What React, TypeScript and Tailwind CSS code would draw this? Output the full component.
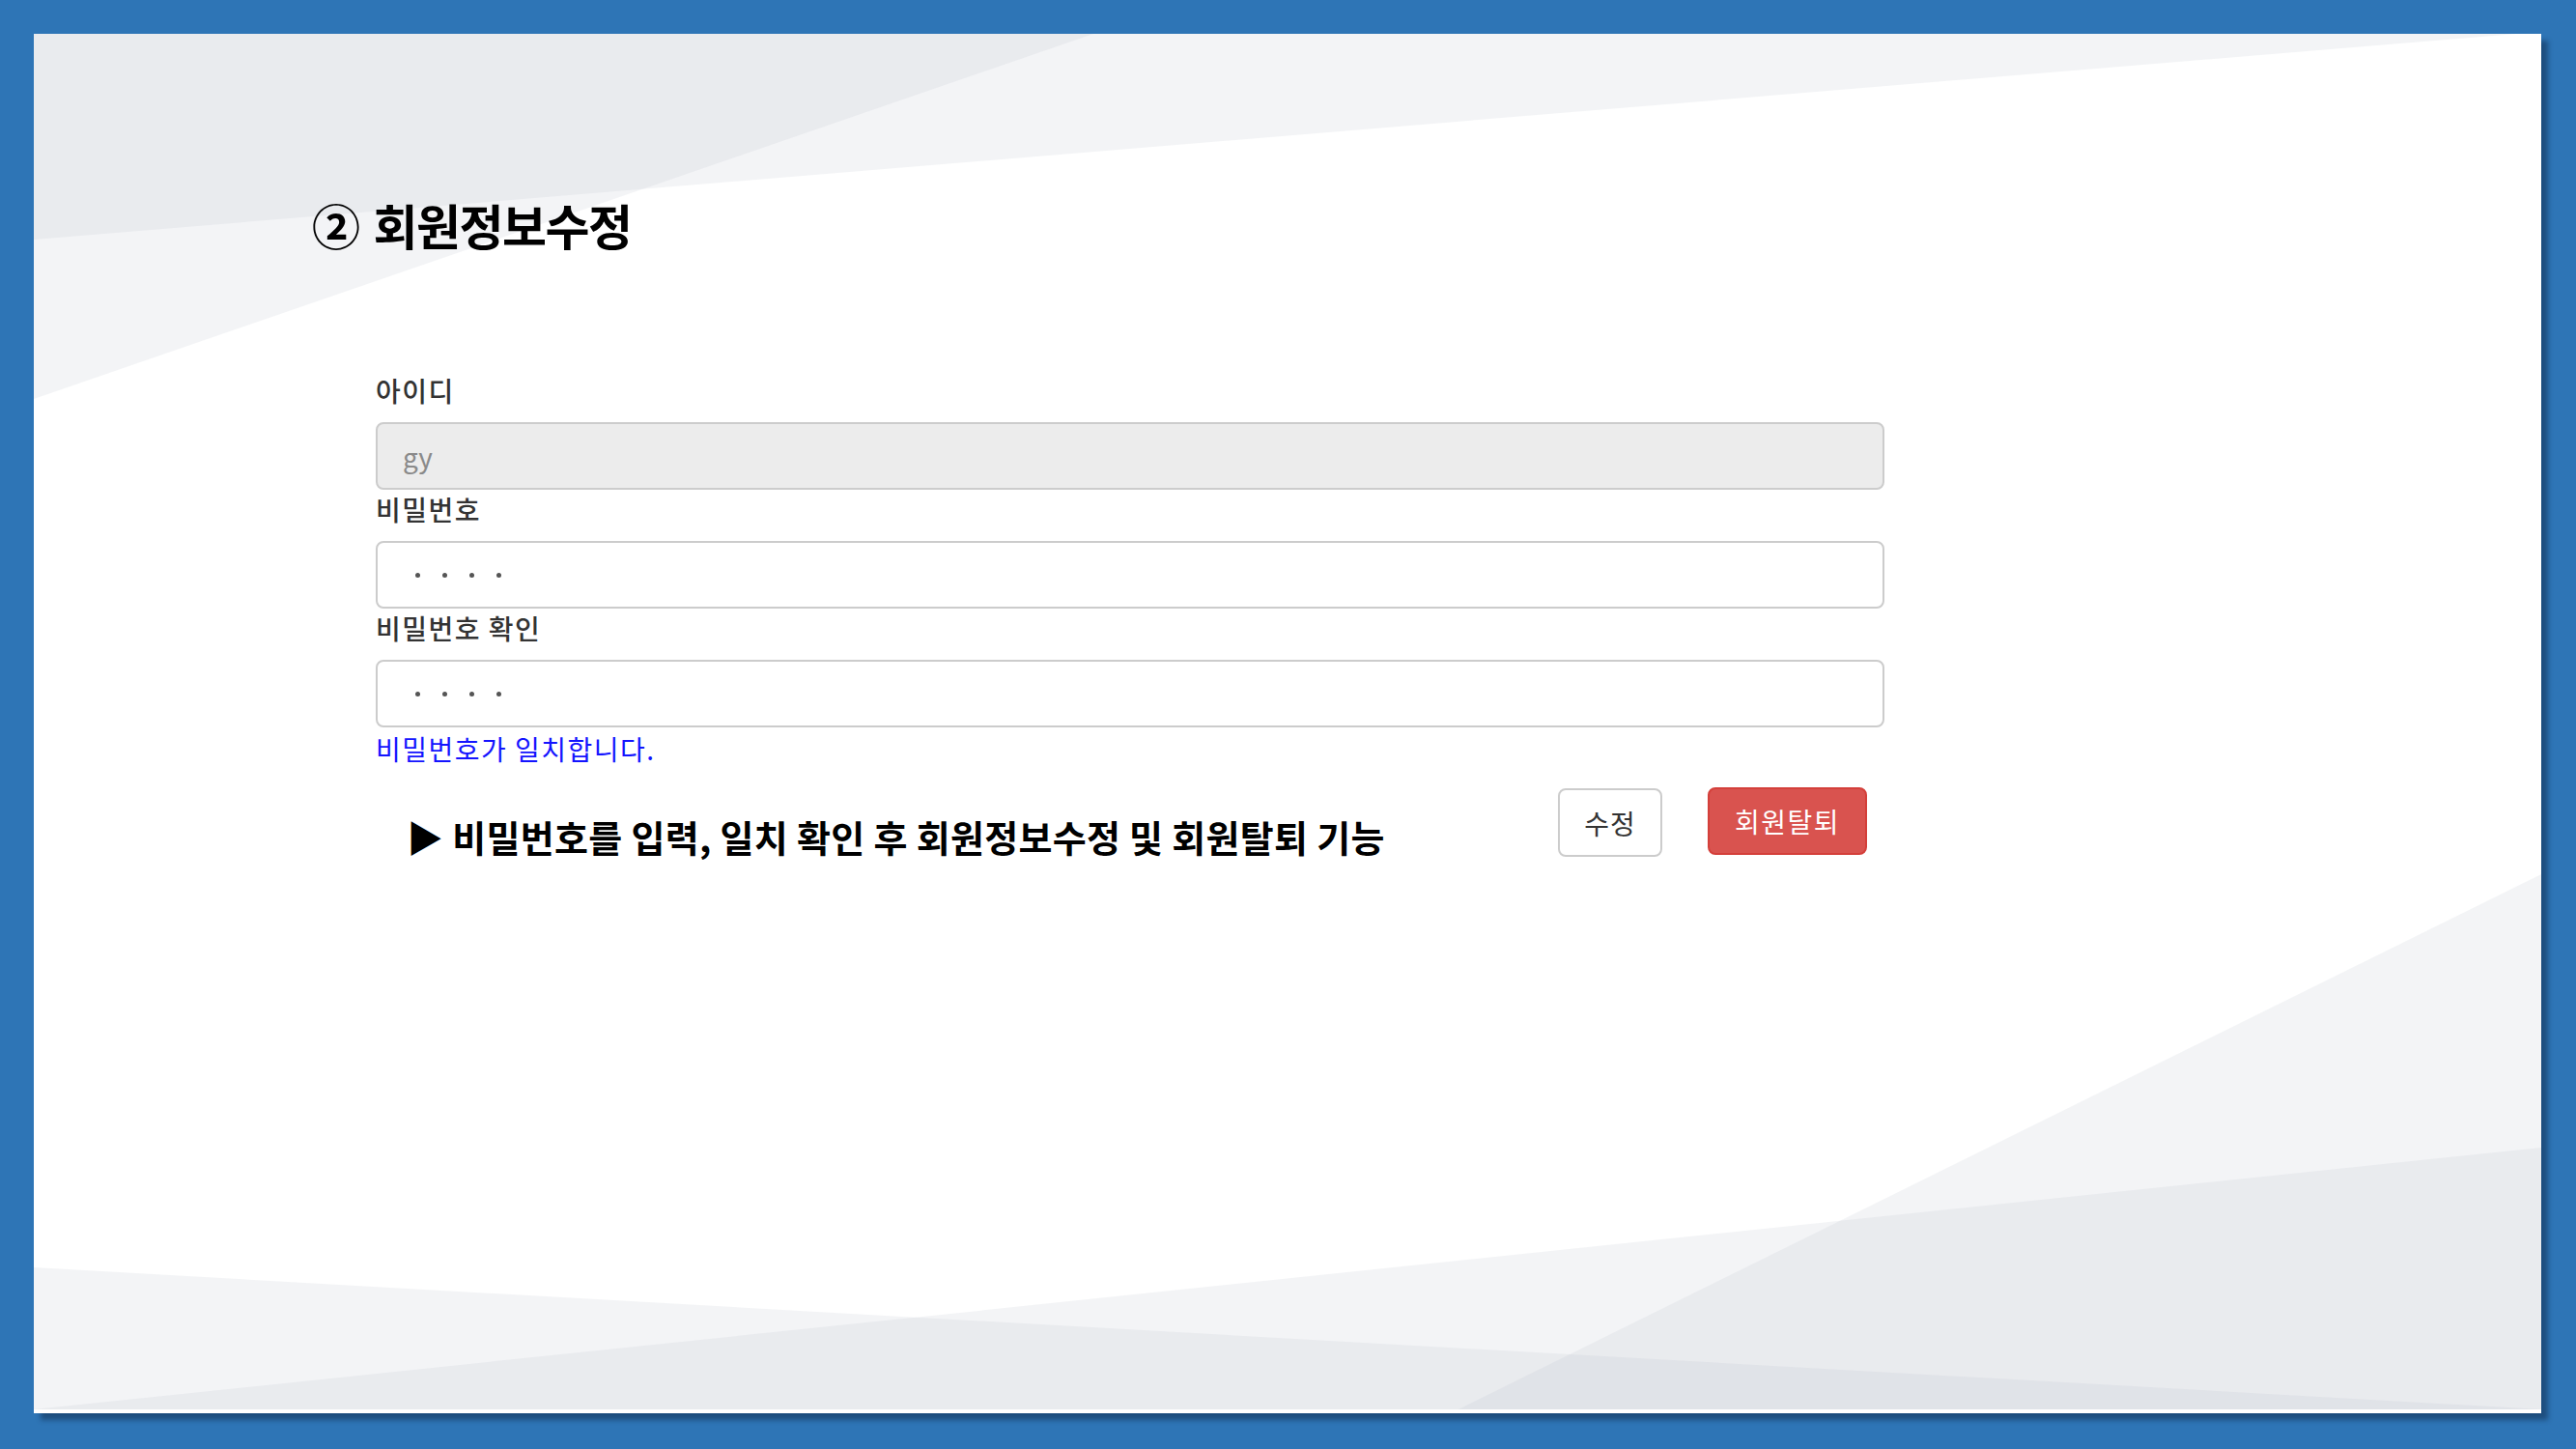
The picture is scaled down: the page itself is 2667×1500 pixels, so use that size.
const font = "font-['Noto_Sans_CJK_KR','Noto_Sans',sans-serif]"

function Backdrop() {
    return (
        <svg
            className="absolute inset-0"
            width="2596"
            height="1428"
            viewBox="0 0 2596 1428"
        >
            <g fill="rgb(184,190,202)" fillOpacity="0.17">
                <polygon points="0,0 2570,0 0,213" />
                <polygon points="0,0 1097,0 0,378" />
                <polygon points="1475,1424 2596,870 2596,1424" />
                <polygon points="0,1277 2596,1424 0,1424" />
                <polygon points="0,1424 2596,1153 2596,1424" />
            </g>
        </svg>
    )
}

function Field({ label, children }: { label: string; children: React.ReactNode }) {
    return (
        <div>
            <label className="block text-[28px] leading-[40px] tracking-[1.5px] mb-[13px] font-medium text-[#333]">
                {label}
            </label>
            {children}
        </div>
    )
}

function Dots() {
    return (
        <div className="h-[70px] w-full rounded-[8px] border-2 border-[#cccccc] bg-white flex items-center gap-[23px] pl-[39px]">
            {[0, 1, 2, 3].map((i) => (
                <span key={i} className="w-[5px] h-[5px] rounded-full bg-[#555]" />
            ))}
        </div>
    )
}

export default function App() {
    return (
        <main className={`w-full h-[1500px] bg-[#2e75b6] pt-[35px] pl-[35px] ${font}`}>
            <div className="relative w-[2596px] h-[1428px] bg-white shadow-[7px_7px_5px_rgba(10,30,60,0.45)] overflow-hidden">
                <Backdrop />

                <section className="relative pt-[172px] pl-[288px]">
                    <h1 className="text-[50px] leading-none font-bold tracking-[-1.5px] text-black">
                        ②<span className="ml-[15px]">회원정보수정</span>
                    </h1>
                </section>

                <form className="relative mt-[127px] ml-[354px] w-[1562px]">
                    <Field label="아이디">
                        <div className="h-[70px] w-full rounded-[8px] border-2 border-[#cccccc] bg-[#ececec] flex items-center pl-[26px] text-[28px] text-[#8a8a8a]">
                            gy
                        </div>
                    </Field>
                    <Field label="비밀번호">
                        <Dots />
                    </Field>
                    <Field label="비밀번호 확인">
                        <Dots />
                    </Field>
                    <p className="mt-[2px] text-[28px] leading-[40px] tracking-[1.5px] text-[#1414ff]">
                        비밀번호가 일치합니다.
                    </p>

                    <div className="mt-[20px] flex justify-between items-start">
                        <p className="mt-[32px] pl-[32px] text-[38px] leading-none font-bold tracking-[0.3px] text-black">
                            ▶ 비밀번호를 입력, 일치 확인 후 회원정보수정 및 회원탈퇴 기능
                        </p>
                        <div className="flex items-start gap-[47px] pr-[18px]">
                            <button
                                type="button"
                                className="mt-[1px] w-[108px] h-[71px] rounded-[8px] border-2 border-[#cccccc] bg-white text-[28px] tracking-[1px] text-[#333]"
                            >
                                수정
                            </button>
                            <button
                                type="button"
                                className="w-[165px] h-[70px] rounded-[8px] border-2 border-[#d43f3a] bg-[#d9534f] text-[28px] tracking-[1.5px] text-white"
                            >
                                회원탈퇴
                            </button>
                        </div>
                    </div>
                </form>
            </div>
        </main>
    )
}
